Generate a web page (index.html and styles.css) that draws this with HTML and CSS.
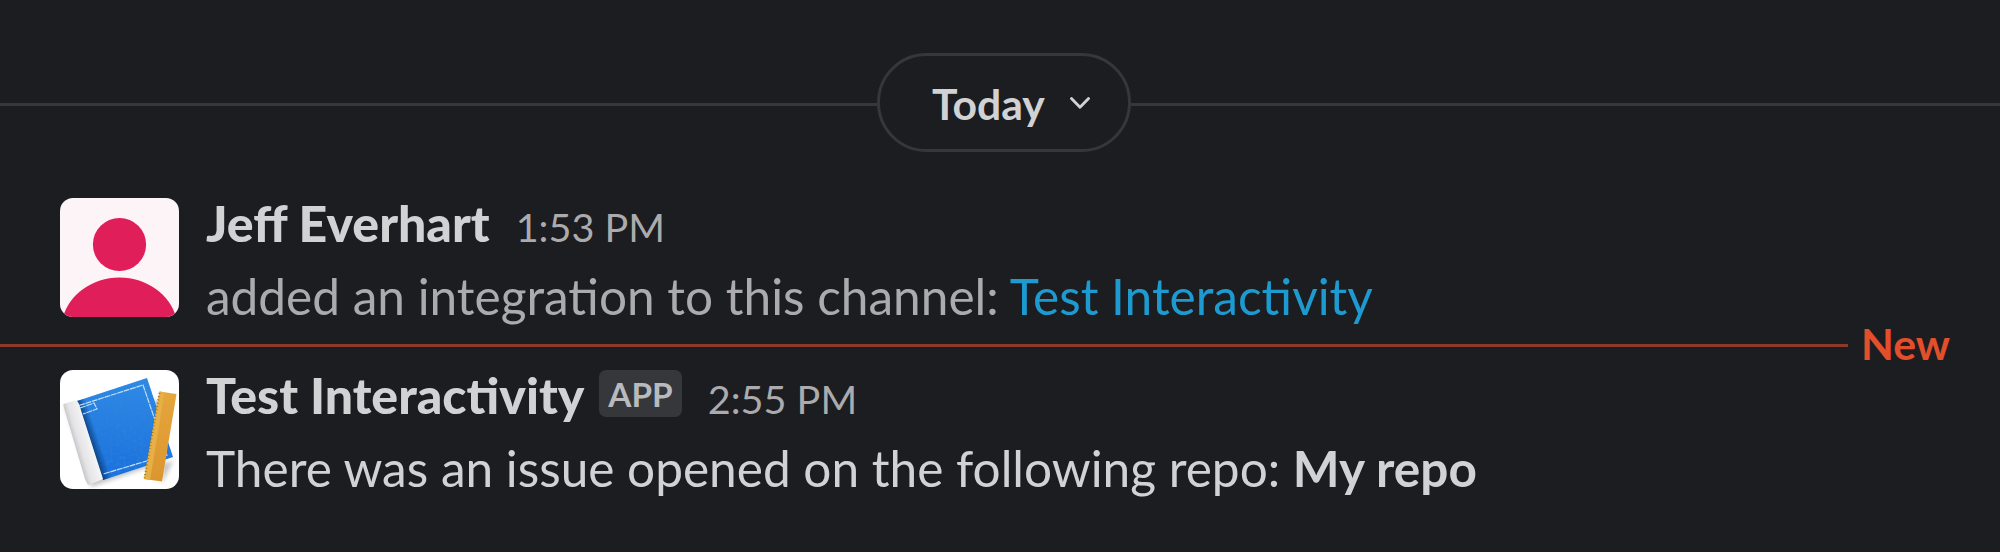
FILE: index.html
```html
<!DOCTYPE html>
<html lang="en">
<head>
<meta charset="utf-8">
<title>Channel messages</title>
<link rel="stylesheet" href="styles.css">
</head>
<body>
<main class="channel">
  <div class="day">
    <span class="day-line"></span>
    <button class="day-pill"><span class="day-label">Today</span>
      <svg class="chevron" width="20" height="13" viewBox="0 0 20 13"><path d="M1.5 1.5 10 10.3 18.5 1.5"/></svg>
    </button>
    <span class="day-line"></span>
  </div>

  <article class="message">
    <svg class="avatar" viewBox="0 0 119 119">
      <rect width="119" height="119" fill="#fdf4f7"/>
      <circle cx="59.5" cy="46.5" r="26.6" fill="#e01e5a"/>
      <path d="M3 119C9 97 32 79.500 59.500 79.500S110 97 116 119Z" fill="#e01e5a"/>
    </svg>
    <div class="content">
      <div class="heading"><span class="name">Jeff Everhart</span><time class="time">1:53 PM</time></div>
      <p class="text muted">added an integration to this channel: <a class="link">Test Interactivity</a></p>
    </div>
  </article>

  <div class="unread"><span class="unread-line"></span><span class="unread-label">New</span></div>

  <article class="message">
    <svg class="avatar" viewBox="0 0 119 119">
      <defs>
        <linearGradient id="cover" x1="0" y1="0" x2="0" y2="1"><stop offset="0" stop-color="#2f8ae6"/><stop offset="1" stop-color="#1b70dd"/></linearGradient>
        <linearGradient id="roll" gradientUnits="userSpaceOnUse" x1="11" y1="74" x2="31" y2="68"><stop offset="0" stop-color="#b4b4b7"/><stop offset=".4" stop-color="#e4e4e6"/><stop offset="1" stop-color="#f6f6f7"/></linearGradient>
        <linearGradient id="spine" gradientUnits="userSpaceOnUse" x1="29" y1="70" x2="38" y2="67"><stop offset="0" stop-color="#0b3e7c"/><stop offset="1" stop-color="#0b3e7c" stop-opacity="0"/></linearGradient>
        <linearGradient id="ruler" x1="0" y1="0" x2="0" y2="1"><stop offset="0" stop-color="#e5a63c"/><stop offset="1" stop-color="#dc962f"/></linearGradient>
        <filter id="soft" x="-20%" y="-20%" width="140%" height="140%"><feGaussianBlur stdDeviation="2.2"/></filter>
        <filter id="grain" x="0" y="0" width="100%" height="100%">
          <feTurbulence type="fractalNoise" baseFrequency=".3" numOctaves="2" seed="4"/>
          <feColorMatrix values="0 0 0 0 .03  0 0 0 0 .25  0 0 0 0 .65  2.4 0 0 0 -1.05"/>
          <feComposite in2="SourceGraphic" operator="in"/>
        </filter>
      </defs>
      <rect width="119" height="119" fill="#fff"/>
      <path d="M5 36 31 117 86 98 113 91 102 114 106 30Z" fill="#555" opacity=".35" filter="url(#soft)"/>
      <path d="M17 31 87 8 113 87 43 110Z" fill="url(#cover)"/>
      <path d="M17 31 87 8 113 87 43 110Z" fill="#fff" filter="url(#grain)" opacity=".5"/>
      <path d="M17 31 25 28.500 51 107.500 43 110Z" fill="url(#spine)"/>
      <g fill="none" stroke="#c4dff8" stroke-width="1.2" stroke-dasharray="6 .7">
        <path d="M19 35.500 83 15 107 85 43 104"/>
        <path d="M20 38 34 33 37 39 34 40 23 44"/>
      </g>
      <path d="M3.500 34 15 30.500C18 31 18 32 19 34L43 109 29 115C27 114 26 111 25 109L3.500 36Z" fill="url(#roll)"/>
      <path d="M99.500 21.500 116.500 24 102 111.500 84 109Z" fill="url(#ruler)"/>
      <path d="M99.500 21.500 104.500 22.300 90 110 84 109Z" fill="#e6b045"/>
      <path d="M99.500 23 84.500 108" stroke="#8e6625" stroke-width="2" stroke-dasharray=".8 2.500" fill="none"/>
    </svg>
    <div class="content">
      <div class="heading"><span class="name">Test Interactivity</span><span class="badge">APP</span><time class="time">2:55 PM</time></div>
      <p class="text">There was an issue opened on the following repo: <b class="strong">My repo</b></p>
    </div>
  </article>
</main>
</body>
</html>
```
FILE: styles.css
```css
* { box-sizing: border-box; }
body {
  margin: 0;
  background: #1c1d21;
  color: #d1d2d3;
  font-family: Lato, sans-serif;
}
.channel {
  height: 552px;
  padding-top: 53px;
  display: flex;
  flex-direction: column;
  overflow: hidden;
}
.day { display: flex; align-items: center; height: 99px; }
.day-line { flex: 1; height: 3px; margin-top: 4px; background: #35373b; }
.day-line:first-child { flex: 0 0 877px; }
.day-pill {
  width: 254px;
  height: 99px;
  padding: 3px 38px 0 53px;
  display: flex;
  align-items: center;
  justify-content: space-between;
  border: 3px solid #35373b;
  border-radius: 50px;
  background: none;
  color: #d1d2d3;
  font: 700 42.7px/52px Lato, sans-serif;
}
.day-label { margin-left: -1px; }
.chevron { fill: none; stroke: #d1d2d3; stroke-width: 2.8; stroke-linecap: round; stroke-linejoin: round; margin-top: -2px; }
.message {
  display: flex;
  gap: 27px;
  height: 146px;
  margin: 35px 0 0 60px;
}
.avatar { flex: none; width: 119px; height: 119px; margin-top: 11px; border-radius: 13px; }
.heading { display: flex; align-items: baseline; height: 73px; line-height: 73px; }
.name { font-size: 49.8px; font-weight: 900; }
.name:not(:last-child) { font-size: 50px; }
.time { margin-left: 26px; font-size: 39.6px; color: #ababad; }
.badge {
  align-self: flex-start;
  height: 47px;
  margin: 11px 0 0 15px;
  padding: 0 9px;
  border-radius: 7px;
  background: #35373b;
  color: #b9babd;
  font-size: 33.3px;
  font-weight: 700;
  line-height: 49px;
}
.text { margin: 0; font-size: 49.55px; line-height: 73px; white-space: nowrap; }
.muted { color: #ababad; }
.link { color: #1d9bd1; }
.strong { font-weight: 700; }
.unread { display: flex; align-items: center; height: 52px; margin: -14px 0 -47px; }
.unread-line { flex: 0 0 1848px; height: 3px; background: #8b3928; }
.unread-label { margin: -3px 0 0 13px; color: #e34e2b; font-size: 42.7px; font-weight: 700; line-height: 52px; }
```
